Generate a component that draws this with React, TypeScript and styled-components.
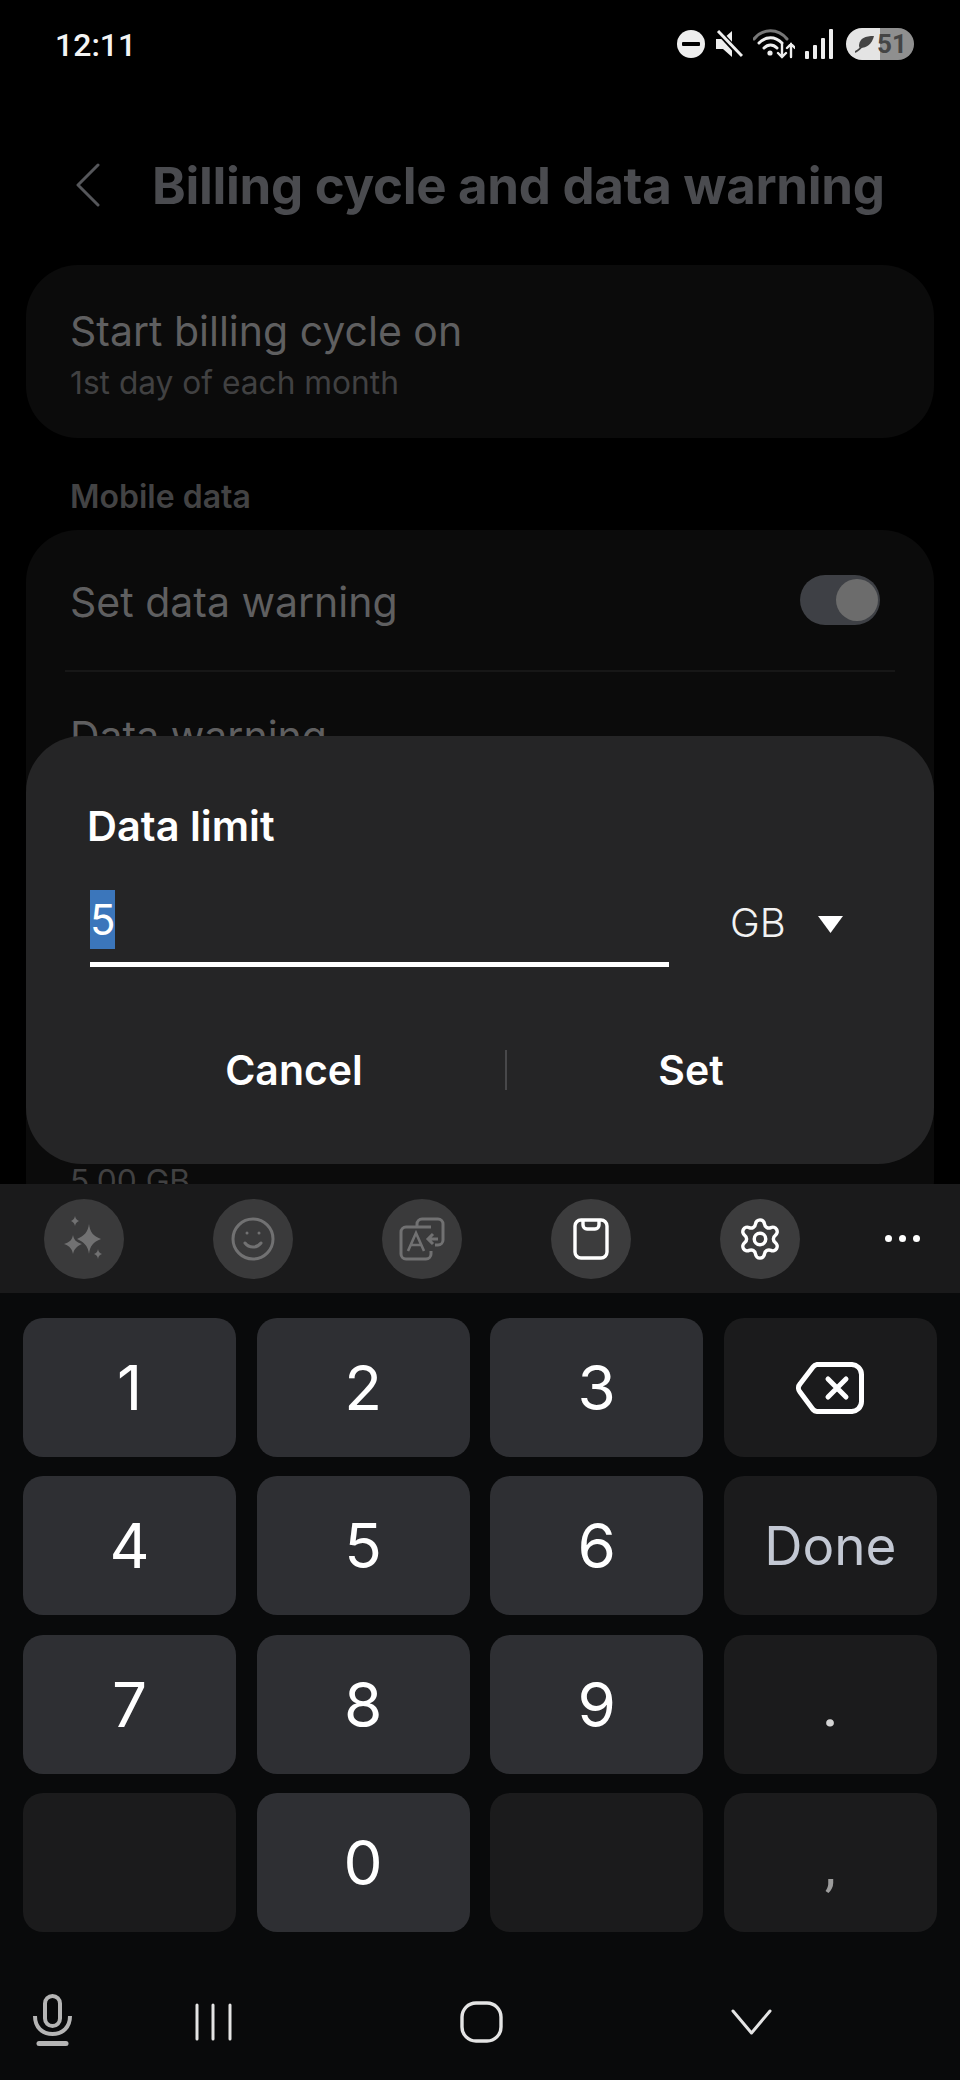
import styled, { createGlobalStyle } from "styled-components";
import { Settings, Smile } from "lucide-react";

const GlobalStyle = createGlobalStyle`
html, body {
  margin: 0;
  padding: 0;
  background: #000;
  font-family: "Inter", "Liberation Sans", sans-serif;
}
* { box-sizing: border-box; }
`;

const Screen = styled.div`
  position: relative;
  width: 960px;
  height: 2080px;
  overflow: hidden;
  background: #000;
  display: flex;
  flex-direction: column;
`;

const Behind = styled.div`
  height: 1184px;
  overflow: hidden;
  flex: none;
`;

const StatusBar = styled.div`
  height: 90px;
  padding: 25px 46px 0 55px;
  display: flex;
  align-items: flex-start;
  justify-content: space-between;
`;

const Time = styled.div`
  font-family: "Roboto", sans-serif;
  font-size: 32px;
  line-height: 40px;
  font-weight: 500;
  color: #f4f4f4;
`;

const StatusIcons = styled.div`
  display: flex;
  align-items: center;
  height: 40px;
  margin-top: -1px;
  gap: 10px;
`;

const Battery = styled.div`
  position: relative;
  width: 68px;
  height: 32px;
  margin-left: 3px;
  border-radius: 16px;
  overflow: hidden;
  display: flex;
  align-items: center;
  background: linear-gradient(90deg, #e4e4e4 0 50%, #8f8f8f 50% 100%);
  font-family: "Roboto", sans-serif;
  font-size: 26px;
  font-weight: 700;
  color: #444;
  padding-left: 31px;
  svg { position: absolute; left: 9px; top: 7px; }
`;

const TopBar = styled.div`
  height: 175px;
  padding: 0 0 0 76px;
  display: flex;
  align-items: flex-start;
  gap: 52px;
`;

const BackIcon = styled.svg`
  margin-top: 73px;
`;

const Title = styled.h1`
  margin: 64px 0 0;
  font-size: 51px;
  line-height: 64px;
  font-weight: 700;
  letter-spacing: -0.3px;
  color: #4a4b4f;
  white-space: nowrap;
`;

const Card = styled.section`
  margin: 0 26px;
  background: #0b0b0b;
  border-radius: 52px;
  padding: 0 44px;
`;

const FirstRow = styled.div`
  height: 173px;
  padding-top: 40px;
`;

const RowTitle = styled.div`
  font-size: 41px;
  line-height: 52px;
  color: #5f5f60;
  white-space: nowrap;
`;

const RowSub = styled.div`
  font-size: 31.700px;
  line-height: 44px;
  margin-top: 4px;
  color: #414142;
  white-space: nowrap;
`;

const SectionLabel = styled.div`
  height: 92px;
  padding: 39px 0 0 70px;
  font-size: 32px;
  line-height: 40px;
  font-weight: 600;
  color: #434344;
`;

const SwitchRow = styled.div`
  height: 142px;
  display: flex;
  align-items: center;
  justify-content: space-between;
  border-bottom: 2px solid #171717;
  margin: 0 -5px;
  padding: 0 15px 0 5px;
`;

const SwitchLabel = styled(RowTitle)`
  margin-top: 4px;
`;

const Toggle = styled.div`
  width: 80px;
  height: 50px;
  border-radius: 25px;
  background: #3e4045;
  display: flex;
  justify-content: flex-end;
  padding: 4px 2px;
`;

const Thumb = styled.div`
  width: 42px;
  height: 42px;
  border-radius: 50%;
  background: #6c6c6c;
`;

const ValueRow = styled.div`
  padding-top: 38px;
  height: 560px;
`;

const ClippedValue = styled.div`
  margin-top: 404px;
  font-size: 31.700px;
  line-height: 30px;
  color: #414142;
`;

const Dialog = styled.div`
  position: absolute;
  left: 26px;
  top: 736px;
  width: 908px;
  height: 428px;
  background: #252526;
  border-radius: 56px;
  padding: 65px 61px 0 61px;
`;

const DialogTitle = styled.div`
  font-size: 41.500px;
  line-height: 50px;
  font-weight: 600;
  color: #fff;
`;

const InputRow = styled.div`
  margin-top: 39px;
  display: flex;
  align-items: flex-start;
  padding-left: 3px;
`;

const Field = styled.div`
  width: 579px;
  height: 77px;
  border-bottom: 5px solid #fff;
`;

const Selected = styled.span`
  display: block;
  width: 25px;
  height: 59px;
  background: #3b76bb;
  color: #fff;
  font-size: 42px;
  line-height: 59px;
  text-align: center;
`;

const Unit = styled.div`
  margin: 7px 0 0 61px;
  font-size: 40px;
  line-height: 52px;
  font-weight: 300;
  color: #f2f2f2;
`;

const Caret = styled.svg`
  margin: 26px 0 0 32px;
`;

const Actions = styled.div`
  margin-top: 77px;
  display: flex;
  align-items: center;
  margin-left: -61px;
  margin-right: -61px;
  padding-left: 57px;
`;

const ActionButton = styled.div<{ $w: number }>`
  width: ${(p) => p.$w}px;
  text-align: center;
  font-size: 41px;
  line-height: 52px;
  font-weight: 600;
  color: #fff;
`;

const ActionDivider = styled.div`
  width: 2px;
  height: 40px;
  background: #48484a;
`;

const Keyboard = styled.div`
  height: 896px;
  flex: none;
  background: #090a0b;
`;

const Toolbar = styled.div`
  height: 109px;
  background: #1a1a1b;
  display: flex;
  align-items: center;
  padding-left: 44px;
  gap: 89px;
`;

const ToolButton = styled.div<{ $dim?: boolean }>`
  width: 80px;
  height: 80px;
  flex: none;
  border-radius: 50%;
  background: ${(p) => (p.$dim ? "#3a3a3b" : "#3c3c3d")};
  color: ${(p) => (p.$dim ? "#717172" : "#fff")};
  display: flex;
  align-items: center;
  justify-content: center;
`;

const MoreDots = styled.div`
  display: flex;
  gap: 7px;
  margin-left: -4px;
  span {
    width: 7px;
    height: 7px;
    border-radius: 50%;
    background: #fff;
  }
`;

const KeyGrid = styled.div`
  display: grid;
  grid-template-columns: repeat(4, 213px);
  grid-auto-rows: 139px;
  column-gap: 20.6px;
  row-gap: 19.3px;
  padding: 25px 0 0 23px;
`;

const Key = styled.div<{ $side?: boolean }>`
  border-radius: 20px;
  background: ${(p) => (p.$side ? "#1b1b1c" : "#2e2f33")};
  color: #fff;
  display: flex;
  align-items: center;
  justify-content: center;
  font-size: 62px;
  font-weight: 400;
`;

const DoneLabel = styled.span`
  font-size: 53px;
  color: #c3c8d3;
`;

const PunctLabel = styled.span<{ $top: number; $light?: boolean }>`
  font-family: "Roboto", sans-serif;
  font-size: 56px;
  font-weight: ${(p) => (p.$light ? 400 : 500)};
  color: ${(p) => (p.$light ? "#9c9c9c" : "#d4d4d4")};
  margin-top: ${(p) => p.$top}px;
`;

const NavBar = styled.div`
  display: flex;
  align-items: flex-start;
  padding: 62px 0 0 33px;
  gap: 123px;
`;

const NavKeys = styled.div`
  display: flex;
  align-items: center;
  gap: 228px;
  margin-top: 7px;
`;

function DndIcon() {
  return (
    <svg width="28" height="28" viewBox="0 0 28 28">
      <circle cx="14" cy="14" r="14" fill="#eee" />
      <rect x="5" y="12" width="18" height="4" rx="1" fill="#000" />
    </svg>
  );
}

function MuteIcon() {
  return (
    <svg width="28" height="28" viewBox="0 0 28 28">
      <path d="M1 9h7l9-8v26l-9-8H1z" fill="#eee" />
      <path d="M3 1l24 26" stroke="#000" strokeWidth="6" />
      <path d="M3 1l24 25" stroke="#eee" strokeWidth="3" />
    </svg>
  );
}

function WifiIcon() {
  return (
    <svg width="42" height="30" viewBox="0 0 42 30" fill="none" strokeLinecap="round">
      <path d="M1 10C10 -1 25 -1 34 10" stroke="#777" strokeWidth="3" />
      <path d="M6 14c7-7 16-7 23 0" stroke="#eee" strokeWidth="3" />
      <path d="M11 19c4-4 9-4 13 0" stroke="#eee" strokeWidth="3" />
      <circle cx="17" cy="24" r="2.6" fill="#eee" />
      <path d="M29 15v13m-4-4 4 4 4-4M38 28V15m-4 4 4-4 4 4" stroke="#eee" strokeWidth="2.4" />
    </svg>
  );
}

function SignalIcon() {
  return (
    <svg width="28" height="30" viewBox="0 0 28 30" fill="#eee">
      <rect x="0" y="22" width="4" height="8" rx="1" />
      <rect x="8" y="16" width="4" height="14" rx="1" />
      <rect x="16" y="9" width="4" height="21" rx="1" />
      <rect x="24" y="0" width="4" height="30" rx="1" />
    </svg>
  );
}

function LeafIcon() {
  return (
    <svg width="20" height="18" viewBox="0 0 20 18" fill="#444">
      <path d="M19 1C10 1 5 3 4 10c0 1 0 2 1 3 7 0 12-4 14-12z" />
      <path d="M0 17c3-1 5-3 9-8" stroke="#444" strokeWidth="2" fill="none" />
    </svg>
  );
}

function SparkleIcon() {
  return (
    <svg width="42" height="46" viewBox="0 0 42 46" fill="currentColor">
      <path d="M26 8c1 8 4 12 12 15-8 3-11 7-12 15-1-8-5-12-12-15 7-3 11-7 12-15z" />
      <path d="M10 19c1 5 3 7 9 9-5 2-8 5-9 10-1-5-3-8-9-10 6-2 8-4 9-9z" />
      <path d="M12 0c.6 3 2 4 4 5-2 1-3.4 2-4 5-.6-3-2-4-4-5 2-1 3.4-2 4-5zM35 33c.5 3 1.6 4 4 5-2.4 1-3.5 2-4 5-.5-3-1.6-4-4-5 2.400-1 3.500-2 4-5z" />
    </svg>
  );
}

function TranslateIcon() {
  return (
    <svg width="46" height="44" viewBox="0 0 46 44" fill="none" stroke="currentColor" strokeWidth="3">
      <path d="M18 9V7a5 5 0 0 1 5-5h16a5 5 0 0 1 5 5v16a5 5 0 0 1-5 5h-3" />
      <path d="M32 10H7a5 5 0 0 0-5 5v22a5 5 0 0 0 5 5h20a5 5 0 0 0 5-5v-3" />
      <path d="M9 34l8-18 8 18M12 28h10" strokeWidth="2.600" />
      <path d="M39 22H29m5-5-5 5 5 5" />
    </svg>
  );
}

function ClipboardIcon() {
  return (
    <svg width="36" height="42" viewBox="0 0 36 42" fill="none" stroke="currentColor" strokeWidth="3.400">
      <rect x="2" y="2" width="32" height="38" rx="6" />
      <path d="M10 2v5a4 4 0 0 0 4 4h8a4 4 0 0 0 4-4V2" />
    </svg>
  );
}

function BackspaceIcon() {
  return (
    <svg width="68" height="52" viewBox="0 0 68 52" fill="none" stroke="#fff" strokeWidth="5" strokeLinejoin="round">
      <path d="M21 2.500h34a10 10 0 0 1 10.500 10v27a10 10 0 0 1-10.500 10H21a6 6 0 0 1-4-2L4 30a6 6 0 0 1 0-8L17 5a6 6 0 0 1 4-2.500z" />
      <path d="M32 17l18 18M50 17L32 35" strokeLinecap="round" />
    </svg>
  );
}

function MicIcon() {
  return (
    <svg width="39" height="52" viewBox="0 0 39 52" fill="none" stroke="#b5b5b5" strokeWidth="4">
      <rect x="12" y="2" width="15" height="30" rx="7.500" />
      <path d="M2 22c0 11 7 18 17.500 18S37 33 37 22" />
      <path d="M6 49.500h27" strokeWidth="5" strokeLinecap="round" />
    </svg>
  );
}

function RecentsIcon() {
  return (
    <svg width="37" height="38" viewBox="0 0 37 38" stroke="#e4e4e4" strokeWidth="3" strokeLinecap="round">
      <path d="M2 2v34M18 2v34M35 2v34" />
    </svg>
  );
}

function HomeIcon() {
  return (
    <svg width="43" height="42" viewBox="0 0 43 42" fill="none" stroke="#e4e4e4" strokeWidth="3.400">
      <rect x="2" y="2" width="39" height="38" rx="14" />
    </svg>
  );
}

function DownIcon() {
  return (
    <svg width="41" height="26" viewBox="0 0 41 26" fill="none" stroke="#e4e4e4" strokeWidth="3" strokeLinecap="round" strokeLinejoin="round">
      <path d="M2 2l18.500 22L39 2" />
    </svg>
  );
}

const digits = ["1", "2", "3", "4", "5", "6", "7", "8", "9"];

export default function App() {
  return (
    <Screen>
      <GlobalStyle />
      <Behind>
        <StatusBar>
          <Time>12:11</Time>
          <StatusIcons>
            <DndIcon />
            <MuteIcon />
            <WifiIcon />
            <SignalIcon />
            <Battery>
              <LeafIcon />
              51
            </Battery>
          </StatusIcons>
        </StatusBar>
        <TopBar>
          <BackIcon width="24" height="44" viewBox="0 0 24 44" fill="none" stroke="#55565a" strokeWidth="3" strokeLinecap="round" strokeLinejoin="round">
            <path d="M22 2L2 22l20 20" />
          </BackIcon>
          <Title>Billing cycle and data warning</Title>
        </TopBar>
        <Card>
          <FirstRow>
            <RowTitle>Start billing cycle on</RowTitle>
            <RowSub>1st day of each month</RowSub>
          </FirstRow>
        </Card>
        <SectionLabel>Mobile data</SectionLabel>
        <Card>
          <SwitchRow>
            <SwitchLabel>Set data warning</SwitchLabel>
            <Toggle>
              <Thumb />
            </Toggle>
          </SwitchRow>
          <ValueRow>
            <RowTitle>Data warning</RowTitle>
            <ClippedValue>5.00 GB</ClippedValue>
          </ValueRow>
        </Card>
      </Behind>
      <Dialog>
        <DialogTitle>Data limit</DialogTitle>
        <InputRow>
          <Field>
            <Selected>5</Selected>
          </Field>
          <Unit>GB</Unit>
          <Caret width="25" height="17" viewBox="0 0 25 17" fill="#fff">
            <path d="M0 0h25L12.500 17z" />
          </Caret>
        </InputRow>
        <Actions>
          <ActionButton $w={422}>Cancel</ActionButton>
          <ActionDivider />
          <ActionButton $w={368}>Set</ActionButton>
        </Actions>
      </Dialog>
      <Keyboard>
        <Toolbar>
          <ToolButton $dim>
            <SparkleIcon />
          </ToolButton>
          <ToolButton $dim>
            <Smile size={48} strokeWidth={1.5} />
          </ToolButton>
          <ToolButton $dim>
            <TranslateIcon />
          </ToolButton>
          <ToolButton>
            <ClipboardIcon />
          </ToolButton>
          <ToolButton>
            <Settings size={46} strokeWidth={1.8} />
          </ToolButton>
          <MoreDots>
            <span />
            <span />
            <span />
          </MoreDots>
        </Toolbar>
        <KeyGrid>
          {digits.slice(0, 3).map((d) => (
            <Key key={d}>{d}</Key>
          ))}
          <Key $side>
            <BackspaceIcon />
          </Key>
          {digits.slice(3, 6).map((d) => (
            <Key key={d}>{d}</Key>
          ))}
          <Key $side>
            <DoneLabel>Done</DoneLabel>
          </Key>
          {digits.slice(6, 9).map((d) => (
            <Key key={d}>{d}</Key>
          ))}
          <Key $side>
            <PunctLabel $top={5}>.</PunctLabel>
          </Key>
          <Key $side />
          <Key>0</Key>
          <Key $side />
          <Key $side>
            <PunctLabel $top={8} $light>,</PunctLabel>
          </Key>
        </KeyGrid>
        <NavBar>
          <MicIcon />
          <NavKeys>
            <RecentsIcon />
            <HomeIcon />
            <DownIcon />
          </NavKeys>
        </NavBar>
      </Keyboard>
    </Screen>
  );
}
